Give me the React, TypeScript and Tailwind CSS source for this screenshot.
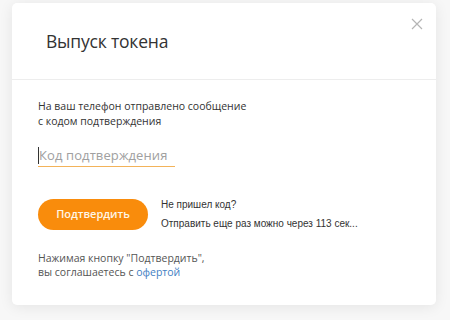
import React from "react";

export default function App() {
  return (
    <div
      className="h-[320px] w-[450px] overflow-hidden bg-[#f7f7f7] pl-[12px] pt-[3px]"
      style={{ fontFamily: '"Open Sans", sans-serif' }}
    >
      <div className="relative h-[302px] w-[424px] rounded-[5px] bg-white shadow-[0_2px_14px_rgba(0,0,0,0.08)]">
        {/* Close */}
        <button type="button" className="absolute right-[12px] top-[14px] p-[1px]">
          <svg width="12" height="12" viewBox="0 0 12 12" fill="none" stroke="#b5b5b5" strokeWidth="1.2">
            <path d="M1 1L11 11M11 1L1 11" />
          </svg>
        </button>

        {/* Header */}
        <div className="flex h-[77px] items-center border-b border-[#ededed] pl-[34px] pt-[2px]">
          <h2 className="text-[17.5px] font-normal leading-none tracking-[-0.2px] text-[#333]">Выпуск токена</h2>
        </div>

        {/* Body */}
        <div className="px-[26px] pt-[19px]">
          <p className="text-[10.5px] leading-[15px] text-[#333]">
            На ваш телефон отправлено сообщение
            <br />с кодом подтверждения
          </p>

          <div className="mt-[16px] w-[137px] border-b border-[#f3b35a] pb-[1px]">
            <div className="flex items-center whitespace-nowrap">
              <span className="h-[17px] w-px bg-[#333]" />
              <span className="text-[13px] leading-[20px] tracking-[0.1px] text-[#a0a0a0]">Код подтверждения</span>
            </div>
          </div>

          <div className="mt-[32px] flex items-start gap-[13px]">
            <button
              type="button"
              className="h-[31px] w-[110px] shrink-0 rounded-full bg-[#f98c0c] text-[11px] font-semibold text-[#fff6e6]"
            >
              Подтвердить
            </button>
            <div className="-mt-[1px] text-[10px] text-[#333]" style={{ fontFamily: '"Liberation Sans", sans-serif' }}>
              <p className="leading-[14px]">Не пришел код?</p>
              <p className="mt-[5px] leading-[14px]">Отправить еще раз можно через 113 сек...</p>
            </div>
          </div>

          <p className="mt-[20px] text-[10.5px] leading-[14px] text-[#555]">
            Нажимая кнопку "Подтвердить",
            <br />
            вы соглашаетесь с <a className="text-[#3f80c3]">офертой</a>
          </p>
        </div>
      </div>
    </div>
  );
}
